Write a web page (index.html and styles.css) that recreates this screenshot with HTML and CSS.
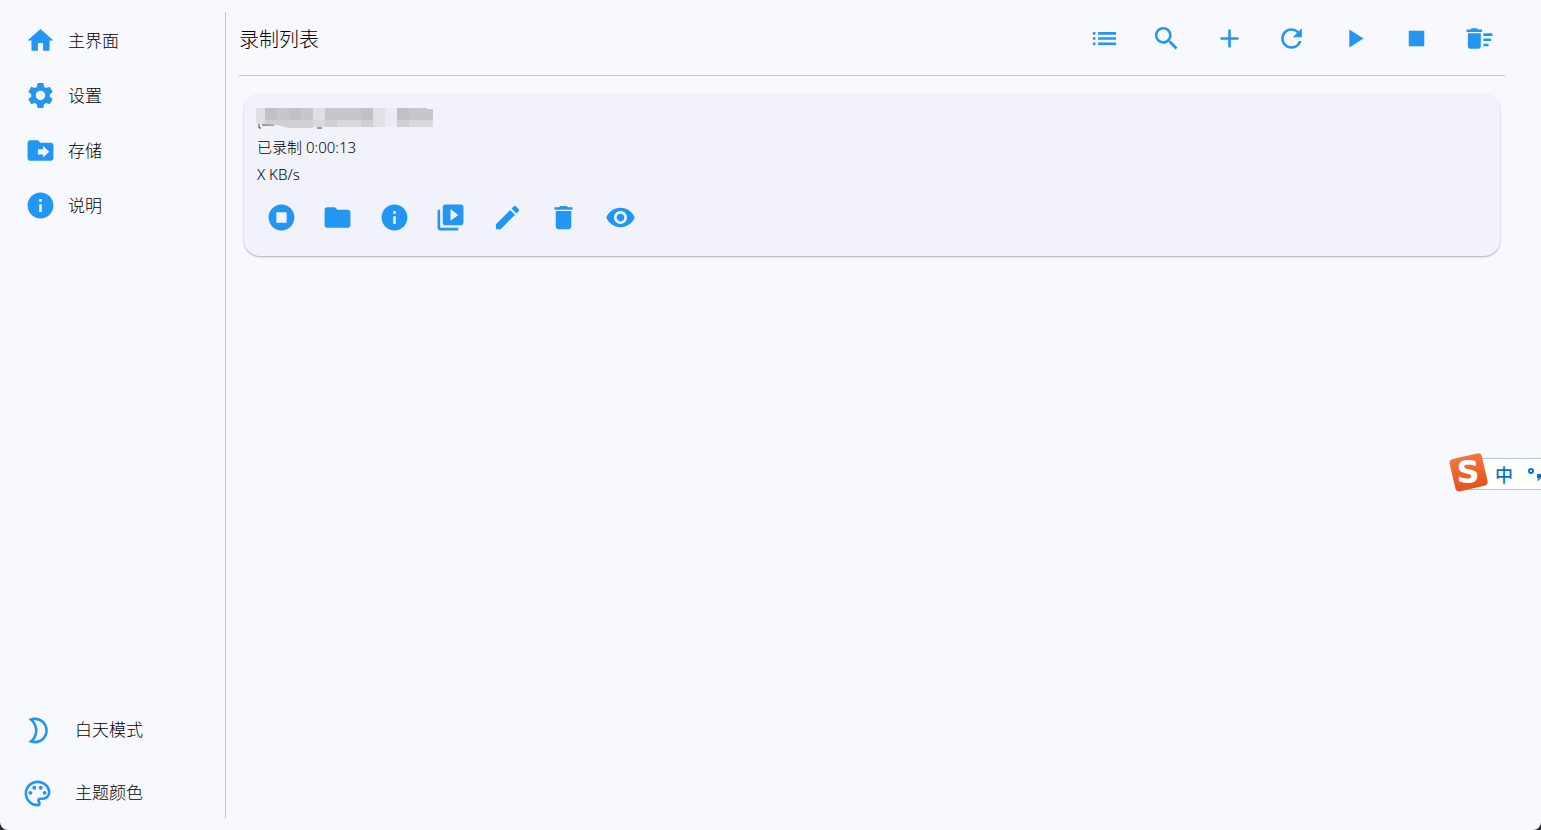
FILE: index.html
```
<!DOCTYPE html>
<html lang="zh-CN">
<head>
    <meta charset="UTF-8">
    <meta name="viewport" content="width=device-width, initial-scale=1.0">
    <title>录制列表</title>
    <link rel="stylesheet" href="styles.css">
</head>
<body>

<div class="window">
    <!-- Left Column: Navigation -->
    <aside class="sidebar">
        <nav class="nav">
            <a href="#" class="nav-item">
                <svg class="icon" viewBox="0 0 24 24"><path d="M10 20v-6h4v6h5v-8h3L12 3 2 12h3v8z"/></svg>
                <span>主界面</span>
            </a>
            <a href="#" class="nav-item">
                <svg class="icon" viewBox="0 0 24 24"><path d="M19.14 12.94c.04-.3.06-.61.06-.94 0-.32-.02-.64-.07-.94l2.03-1.58c.18-.14.23-.41.12-.61l-1.92-3.32c-.12-.22-.37-.29-.59-.22l-2.39.96c-.5-.38-1.03-.7-1.62-.94l-.36-2.54c-.04-.24-.24-.41-.48-.41h-3.84c-.24 0-.43.17-.47.41l-.36 2.54c-.59.24-1.13.57-1.62.94l-2.39-.96c-.22-.08-.47 0-.59.22L2.74 8.87c-.12.21-.08.47.12.61l2.03 1.58c-.05.3-.09.63-.09.94s.02.64.07.94l-2.03 1.58c-.18.14-.23.41-.12.61l1.92 3.32c.12.22.37.29.59.22l2.39-.96c.5.38 1.03.7 1.62.94l.36 2.54c.05.24.24.41.48.41h3.84c.24 0 .44-.17.47-.41l.36-2.54c.59-.24 1.13-.56 1.62-.94l2.39.96c.22.08.47 0 .59-.22l1.92-3.32c.12-.22.07-.47-.12-.61l-2.01-1.58zM12 15.6c-1.98 0-3.6-1.62-3.6-3.6s1.62-3.6 3.6-3.6 3.6 1.62 3.6 3.6-1.62 3.6-3.6 3.6z"/></svg>
                <span>设置</span>
            </a>
            <a href="#" class="nav-item">
                <svg class="icon" viewBox="0 0 24 24"><path d="M20 6h-8l-2-2H4c-1.1 0-2 .9-2 2v12c0 1.1.9 2 2 2h16c1.1 0 2-.9 2-2V8c0-1.1-.9-2-2-2zM10 11h4V8.5l4.8 4.5-4.8 4.5V15h-4z"/></svg>
                <span>存储</span>
            </a>
            <a href="#" class="nav-item">
                <svg class="icon" viewBox="0 0 24 24"><path d="M12 2C6.48 2 2 6.48 2 12s4.48 10 10 10 10-4.48 10-10S17.52 2 12 2zm1 15h-2v-6h2v6zm0-8h-2V7h2v2z"/></svg>
                <span>说明</span>
            </a>
        </nav>
        <div class="theme">
            <button class="theme-item">
                <svg class="icon" viewBox="0 0 24 24"><path d="M10 4c4.41 0 8 3.59 8 8s-3.59 8-8 8c-.34 0-.68-.02-1.01-.07C10.9 17.77 12 14.95 12 12s-1.1-5.77-3.01-7.93C9.32 4.02 9.66 4 10 4m0-2c-1.82 0-3.53.5-5 1.35C7.99 5.08 10 8.3 10 12s-2.01 6.92-5 8.65C6.47 21.5 8.18 22 10 22c5.52 0 10-4.48 10-10S15.52 2 10 2z"/></svg>
                <span>白天模式</span>
            </button>
            <button class="theme-item">
                <svg class="icon" viewBox="0 0 24 24"><path d="M12 22C6.49 22 2 17.51 2 12S6.49 2 12 2s10 4.04 10 9c0 3.31-2.69 6-6 6h-1.77c-.28 0-.5.22-.5.5 0 .12.05.23.13.33.41.47.64 1.06.64 1.67A2.5 2.5 0 0 1 12 22zm0-18c-4.41 0-8 3.59-8 8s3.59 8 8 8c.28 0 .5-.22.5-.5a.54.54 0 0 0-.14-.35c-.41-.46-.63-1.05-.63-1.65a2.5 2.5 0 0 1 2.5-2.5H16c2.21 0 4-1.79 4-4 0-3.86-3.59-7-8-7z"/><circle cx="6.5" cy="11.5" r="1.5"/><circle cx="9.5" cy="7.5" r="1.5"/><circle cx="14.5" cy="7.5" r="1.5"/><circle cx="17.5" cy="11.5" r="1.5"/></svg>
                <span>主题颜色</span>
            </button>
        </div>
    </aside>

    <!-- Right Column: Recordings -->
    <main class="content">
        <header class="content-header">
            <h1>录制列表</h1>
            <div class="toolbar">
                <button class="icon-btn" aria-label="列表"><svg class="icon" viewBox="0 0 24 24"><path d="M3 13h2v-2H3v2zm0 4h2v-2H3v2zm0-8h2V7H3v2zm4 4h14v-2H7v2zm0 4h14v-2H7v2zM7 7v2h14V7H7z"/></svg></button>
                <button class="icon-btn" aria-label="搜索"><svg class="icon" viewBox="0 0 24 24"><path d="M15.5 14h-.79l-.28-.27A6.47 6.47 0 0 0 16 9.5 6.5 6.5 0 1 0 9.5 16c1.61 0 3.09-.59 4.23-1.57l.27.28v.79l5 4.99L20.49 19l-4.99-5zm-6 0C7.01 14 5 11.99 5 9.5S7.01 5 9.5 5 14 7.01 14 9.5 11.99 14 9.5 14z"/></svg></button>
                <button class="icon-btn" aria-label="添加"><svg class="icon" viewBox="0 0 24 24"><path d="M19 13h-6v6h-2v-6H5v-2h6V5h2v6h6z"/></svg></button>
                <button class="icon-btn" aria-label="刷新"><svg class="icon" viewBox="0 0 24 24"><path d="M17.65 6.35A7.96 7.96 0 0 0 12 4c-4.42 0-7.99 3.58-7.99 8s3.57 8 7.99 8c3.73 0 6.84-2.55 7.73-6h-2.08A5.99 5.99 0 0 1 12 18c-3.31 0-6-2.69-6-6s2.69-6 6-6c1.66 0 3.14.69 4.22 1.78L13 11h7V4z"/></svg></button>
                <button class="icon-btn" aria-label="开始"><svg class="icon" viewBox="0 0 24 24"><path d="M8 5v14l11-7z"/></svg></button>
                <button class="icon-btn" aria-label="停止"><svg class="icon" viewBox="0 0 24 24"><path d="M6 6h12v12H6z"/></svg></button>
                <button class="icon-btn" aria-label="清空"><svg class="icon" viewBox="0 0 24 24"><path d="M15 16h4v2h-4zm0-8h7v2h-7zm0 4h6v2h-6zM3 18c0 1.1.9 2 2 2h6c1.1 0 2-.9 2-2V8H3v10zM14 5h-3l-1-1H6L5 5H2v2h12z"/></svg></button>
            </div>
        </header>

        <article class="card">
            <!-- Room name, masked -->
            <svg class="mask" viewBox="0 0 177 21">
                <path d="M3 15v5h2M6 17h12M61 20h5" fill="none" stroke="#444"/>
                <path fill="#dfdfe8" d="M0 0h9v16H0zM57 0h12v12H57z"/>
                <path fill="#c0c0c5" d="M9 0h12v12H9zM33 0h12v12H33zM105 0h12v12h-12zM141 0h12v12h-12z"/>
                <path fill="#c6c6cb" d="M21 0h12v12H21zM45 0h12v12H45zM69 0h36v12H69zM153 0h18v1h6v11h-24z"/>
                <path fill="#cfcfd4" d="M9 12h48v8H33l-12-3-12-1zM69 12h12v7H69zM105 12h12v7h-12zM141 12h12v7h-12z"/>
                <path fill="#d8d8df" d="M57 12h12v7H57zM81 12h24v7H81zM153 12h24v7h-24z"/>
                <path fill="#e0e0e9" d="M117 0h12v19h-12z"/>
                <path fill="#ececf6" d="M129 0h12v19h-12z"/>
            </svg>
            <p>已录制 0:00:13</p>
            <p>X KB/s</p>
            <div class="card-actions">
                <button class="icon-btn" aria-label="停止录制"><svg class="icon" viewBox="0 0 24 24"><path d="M12 2C6.48 2 2 6.48 2 12s4.48 10 10 10 10-4.48 10-10S17.52 2 12 2zm4 14H8V8h8v8z"/></svg></button>
                <button class="icon-btn" aria-label="打开文件夹"><svg class="icon" viewBox="0 0 24 24"><path d="M10 4H4c-1.1 0-2 .9-2 2v12c0 1.1.9 2 2 2h16c1.1 0 2-.9 2-2V8c0-1.1-.9-2-2-2h-8z"/></svg></button>
                <button class="icon-btn" aria-label="详情"><svg class="icon" viewBox="0 0 24 24"><path d="M12 2C6.48 2 2 6.48 2 12s4.48 10 10 10 10-4.48 10-10S17.52 2 12 2zm1 15h-2v-6h2v6zm0-8h-2V7h2v2z"/></svg></button>
                <button class="icon-btn" aria-label="播放"><svg class="icon" viewBox="0 0 24 24"><path d="M4 6H2v14c0 1.1.9 2 2 2h14v-2H4V6zm16-4H8c-1.1 0-2 .9-2 2v12c0 1.1.9 2 2 2h12c1.1 0 2-.9 2-2V4c0-1.1-.9-2-2-2zm-8 12.5v-9l6 4.5-6 4.5z"/></svg></button>
                <button class="icon-btn" aria-label="编辑"><svg class="icon" viewBox="0 0 24 24"><path d="M3 17.25V21h3.75L17.81 9.94l-3.75-3.75zM20.71 7.04a1 1 0 0 0 0-1.41l-2.34-2.34a1 1 0 0 0-1.41 0l-1.83 1.83 3.75 3.75z"/></svg></button>
                <button class="icon-btn" aria-label="删除"><svg class="icon" viewBox="0 0 24 24"><path d="M6 19c0 1.1.9 2 2 2h8c1.1 0 2-.9 2-2V7H6v12zM19 4h-3.5l-1-1h-5l-1 1H5v2h14z"/></svg></button>
                <button class="icon-btn" aria-label="监控"><svg class="icon" viewBox="0 0 24 24"><path d="M12 4.5C7 4.5 2.73 7.61 1 12c1.73 4.39 6 7.5 11 7.5s9.27-3.11 11-7.5c-1.73-4.39-6-7.5-11-7.5zM12 17c-2.76 0-5-2.24-5-5s2.24-5 5-5 5 2.24 5 5-2.24 5-5 5zm0-8c-1.66 0-3 1.34-3 3s1.34 3 3 3 3-1.34 3-3-1.34-3-3-3z"/></svg></button>
            </div>
        </article>
    </main>
</div>

<!-- Floating input method bar -->
<div class="ime">
    <svg class="ime-logo" viewBox="0 0 40 40">
        <defs>
            <linearGradient id="logo" x1="0" y1="0" x2="0" y2="1">
                <stop offset="0" stop-color="#f0783c"/>
                <stop offset="1" stop-color="#e8501c"/>
            </linearGradient>
        </defs>
        <rect x="4" y="4" width="33" height="33" rx="4" fill="url(#logo)" transform="rotate(-13 20 20)"/>
        <text x="20" y="31" text-anchor="middle" class="ime-letter">S</text>
    </svg>
    <span class="ime-lang">中</span>
    <svg class="ime-punct" viewBox="0 0 14 14"><circle cx="4" cy="4" r="2" fill="none" stroke="#0a6ed1" stroke-width="2"/><path d="M10 7h4v4l-3 3-1-1 2-2h-2z" fill="#0a6ed1"/></svg>
</div>

</body>
</html>
```
FILE: styles.css
```
/* General Reset */
* {
    margin: 0;
    padding: 0;
    box-sizing: border-box;
}
body {
    font-family: "Noto Sans", "Noto Sans CJK SC", sans-serif;
    font-weight: 300;
    background-color: #2b2b2e;
    color: #000;
    overflow: hidden;
}
button {
    font: inherit;
    color: inherit;
    background: none;
    border: none;
    cursor: pointer;
}
.icon {
    display: block;
    width: 31px;
    height: 31px;
    fill: #2196f3; /* Blue */
}

.window {
    display: flex;
    height: 100vh;
    padding: 12px 36px 12px 12px;
    background-color: #f8f9ff;
    border-radius: 0 0 8px 8px;
}

/* Left Column: Navigation */
.sidebar {
    width: 214px;
    display: flex;
    flex-direction: column;
    justify-content: space-between;
    border-right: 1px solid #c4c6cf;
    font-size: 17px;
    line-height: 24px;
}
.nav {
    padding-top: 1px;
}
.nav-item {
    display: flex;
    align-items: center;
    gap: 12px;
    height: 55px;
    padding-left: 13px;
    color: inherit;
    text-decoration: none;
}
.theme-item {
    display: flex;
    align-items: center;
    gap: 22px;
    width: 100%;
    height: 50px;
    margin-top: 13px;
    padding-left: 10px;
}

/* Right Column: Recordings */
.content {
    flex: 1;
    padding-left: 13px;
}
.content-header {
    display: flex;
    justify-content: space-between;
    align-items: center;
    height: 64px;
    padding: 0 1px 11px 0;
    border-bottom: 1px solid #c4c6cf;
}
.content-header h1 {
    font-size: 20px;
    font-weight: 300;
}
.toolbar {
    display: flex;
    justify-content: space-between;
    width: 425px;
}
.icon-btn {
    display: flex;
    align-items: center;
    justify-content: center;
    width: 50px;
    height: 50px;
}

/* Recording Card */
.card {
    margin: 18px 5px;
    padding: 14px 12px;
    background-color: #f1f2fa;
    border-radius: 16px;
    box-shadow: 0 1px 2px rgba(0, 0, 0, 0.3);
    font-size: 15px;
    line-height: 27px;
}
.card p {
    padding-left: 1px;
}
.mask {
    display: block;
    width: 177px;
    height: 21px;
    margin-bottom: 5px;
}
.card-actions {
    display: flex;
    justify-content: space-between;
    width: 389px;
    margin-top: 4px;
}

/* Input Method Bar */
.ime {
    position: absolute;
    top: 458px;
    right: 0;
    display: flex;
    align-items: center;
    width: 76px;
    height: 32px;
    background-color: #fff;
    border-top: 1px solid #b4c8dc;
    border-bottom: 1px solid #b4c8dc;
    color: #0a6ed1;
}
.ime-logo {
    flex: none;
    width: 40px;
    height: 40px;
    margin: -4px 7px 0 -17px;
    overflow: visible;
}
.ime-letter {
    fill: #fff;
    font-family: "DejaVu Sans", sans-serif;
    font-size: 32px;
    font-weight: 700;
}
.ime-lang {
    font-size: 18px;
    font-weight: 500;
}
.ime-punct {
    flex: none;
    width: 14px;
    height: 14px;
    margin-left: 14px;
}
```
